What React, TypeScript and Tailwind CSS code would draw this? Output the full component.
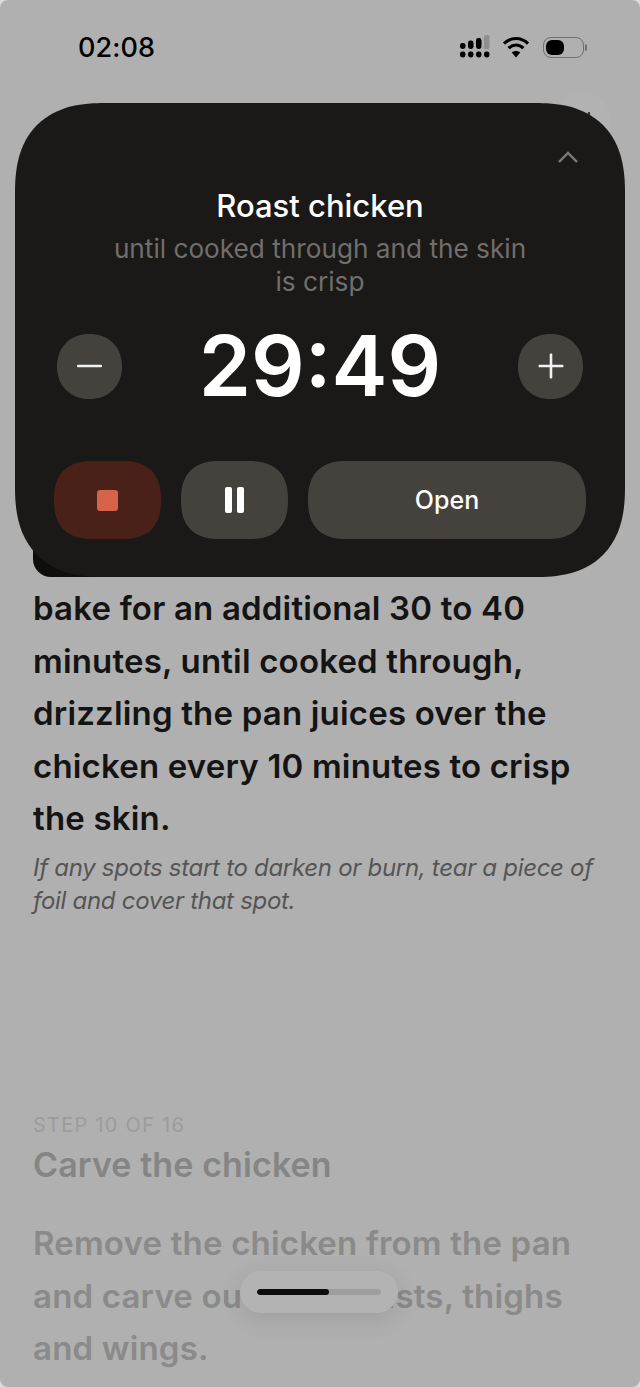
import React from "react";

const font = "font-['Inter',sans-serif]";

const StatusIcons = () => (
  <div className="flex items-center">
    <svg width="34" height="24" viewBox="0 0 34 24" fill="#000">
      <rect x="1" y="8" width="5.5" height="6" rx="2.4" />
      <rect x="9" y="5.5" width="5.5" height="8.5" rx="2.4" />
      <rect x="17" y="3" width="5.5" height="11" rx="2.4" />
      <rect x="25" y="0" width="5.5" height="14" rx="1.5" fill="#8f8f8f" />
      <rect x="1" y="16.5" width="5.5" height="6" rx="2.4" />
      <rect x="9" y="16.5" width="5.5" height="6" rx="2.4" />
      <rect x="17" y="16.5" width="5.5" height="6" rx="2.4" />
      <rect x="25" y="16.5" width="5.5" height="6" rx="2.4" />
    </svg>
    <svg className="ml-[9px]" width="28" height="24" viewBox="0 0 28 24" fill="none" stroke="#000" strokeWidth="3.1">
      <path d="M2 8.6C9 1.8 19 1.8 26 8.6" />
      <path d="M6.6 13.2C11 9 17 9 21.4 13.2" />
      <path d="M14 22.5 9.8 17.6C12.2 15.6 15.8 15.6 18.2 17.6Z" fill="#000" stroke="none" />
    </svg>
    <div className="flex items-center gap-[1px] ml-[13px]">
      <div className="flex items-center w-[41px] h-[21px] p-[2px] rounded-[8px] border border-[#6f6f6f]">
        <div className="w-[18px] h-full rounded-[6px] bg-black" />
      </div>
      <div className="w-[2px] h-[7px] rounded-r-full bg-[#6f6f6f]" />
    </div>
  </div>
);

const RoundButton = ({ children }: { children: React.ReactNode }) => (
  <div className="flex items-center justify-center w-[65px] h-[65px] rounded-[33px] [corner-shape:superellipse(1.1)] bg-[#45423e]">{children}</div>
);

export default function App() {
  return (
    <div className="w-[640px] h-[1387px] bg-[#dcdcdc]">
      <div className={`relative w-[640px] h-[1387px] overflow-hidden rounded-[8px] bg-[#b0b0b0] ${font}`}>
        <div className="flex items-center justify-between h-[94px] pl-[78px] pr-[53px]">
          <span className="text-[27px] leading-none font-medium text-black tracking-[0.1px]">02:08</span>
          <StatusIcons />
        </div>

        <div className="absolute left-[556px] top-[92px] w-[54px] h-[54px] rounded-full bg-[#b2b2b2]" />
        <div className="absolute left-[588px] top-[112px] w-[2px] h-[3px] bg-[#333]" />

        <div className="relative mx-[15px] mt-[9px]">
          <div className="absolute left-[18px] bottom-0 w-[120px] h-[40px] rounded-bl-[18px] bg-[#0e0e0d]" />
          <div className="relative flex flex-col h-[474px] pt-[47px] px-[39px] rounded-[90px] [corner-shape:superellipse(1.3)] bg-[#1a1918]">
            <div className="flex justify-end pr-[7px]">
              <svg width="22" height="14" viewBox="0 0 22 14" fill="none" stroke="#7e7b77" strokeWidth="2.4">
                <path d="M2 12 11 3 20 12" />
              </svg>
            </div>
            <div className="mt-[22px] text-center text-[31px] leading-[40px] font-medium text-white">Roast chicken</div>
            <div className="mt-[6px] px-[50px] text-center text-[26.2px] leading-[33px] text-[#716e6b]">
              until cooked through and the skin is crisp
            </div>
            <div className="flex items-center justify-between mt-[23px] px-[3px]">
              <RoundButton>
                <svg width="26" height="4" viewBox="0 0 26 4"><rect width="25" height="2.6" y="0.7" fill="#f2f2f2" rx="1" /></svg>
              </RoundButton>
              <span className="text-[84px] leading-[90px] font-semibold text-white">29:49</span>
              <RoundButton>
                <svg width="26" height="26" viewBox="0 0 26 26" fill="#f2f2f2">
                  <rect x="0.5" y="11.7" width="25" height="2.6" rx="1" />
                  <rect x="11.7" y="0.5" width="2.6" height="25" rx="1" />
                </svg>
              </RoundButton>
            </div>
            <div className="flex gap-[20px] mt-[50px]">
              <div className="flex items-center justify-center w-[107px] h-[78px] rounded-[39px] [corner-shape:superellipse(1.3)] bg-[#4a2119]">
                <div className="w-[21px] h-[21px] rounded-[3px] bg-[#d5634a]" />
              </div>
              <div className="flex items-center justify-center gap-[5px] w-[107px] h-[78px] rounded-[39px] [corner-shape:superellipse(1.3)] bg-[#45423e]">
                <div className="w-[7px] h-[26px] rounded-[2px] bg-white" />
                <div className="w-[7px] h-[26px] rounded-[2px] bg-white" />
              </div>
              <div className="flex flex-1 items-center justify-center h-[78px] pt-[1px] rounded-[39px] [corner-shape:superellipse(1.3)] bg-[#45423e] text-[25px] font-medium text-white">
                Open
              </div>
            </div>
          </div>
        </div>

        <div className="px-[33px] pt-[5px]">
          <p className="text-[33px] leading-[52.6px] font-semibold tracking-[0.18px] text-[#141414]">
            bake for an additional 30 to 40 minutes, until cooked through, drizzling the pan juices over the chicken every 10 minutes to crisp the skin.
          </p>
          <p className="mt-[6px] text-[24px] leading-[33px] italic tracking-[-0.3px] text-[#555]">
            If any spots start to darken or burn, tear a piece of foil and cover that spot.
          </p>
          <div className="mt-[196px] text-[20px] leading-[24px] tracking-[1.25px] text-[#9c9c9c]">STEP 10 OF 16</div>
          <div className="mt-[5px] text-[34px] leading-[46px] font-semibold tracking-[0.1px] text-[#858585]">Carve the chicken</div>
          <p className="mt-[29px] text-[33px] leading-[52.6px] font-semibold tracking-[0.18px] text-[#8a8a8a]">
            Remove the chicken from the pan and carve out the breasts, thighs and wings.
          </p>
        </div>

        <div className="absolute left-[240px] bottom-[74px] flex items-center justify-center w-[158px] h-[42px] rounded-[21px] bg-[#b3b3b3] shadow-[0_6px_24px_rgba(0,0,0,0.1)]">
          <div className="flex w-[124px] h-[6px] rounded-full bg-[#9e9e9c] overflow-hidden">
            <div className="w-[72px] h-full rounded-full bg-[#0d0d0d]" />
          </div>
        </div>
      </div>
    </div>
  );
}
